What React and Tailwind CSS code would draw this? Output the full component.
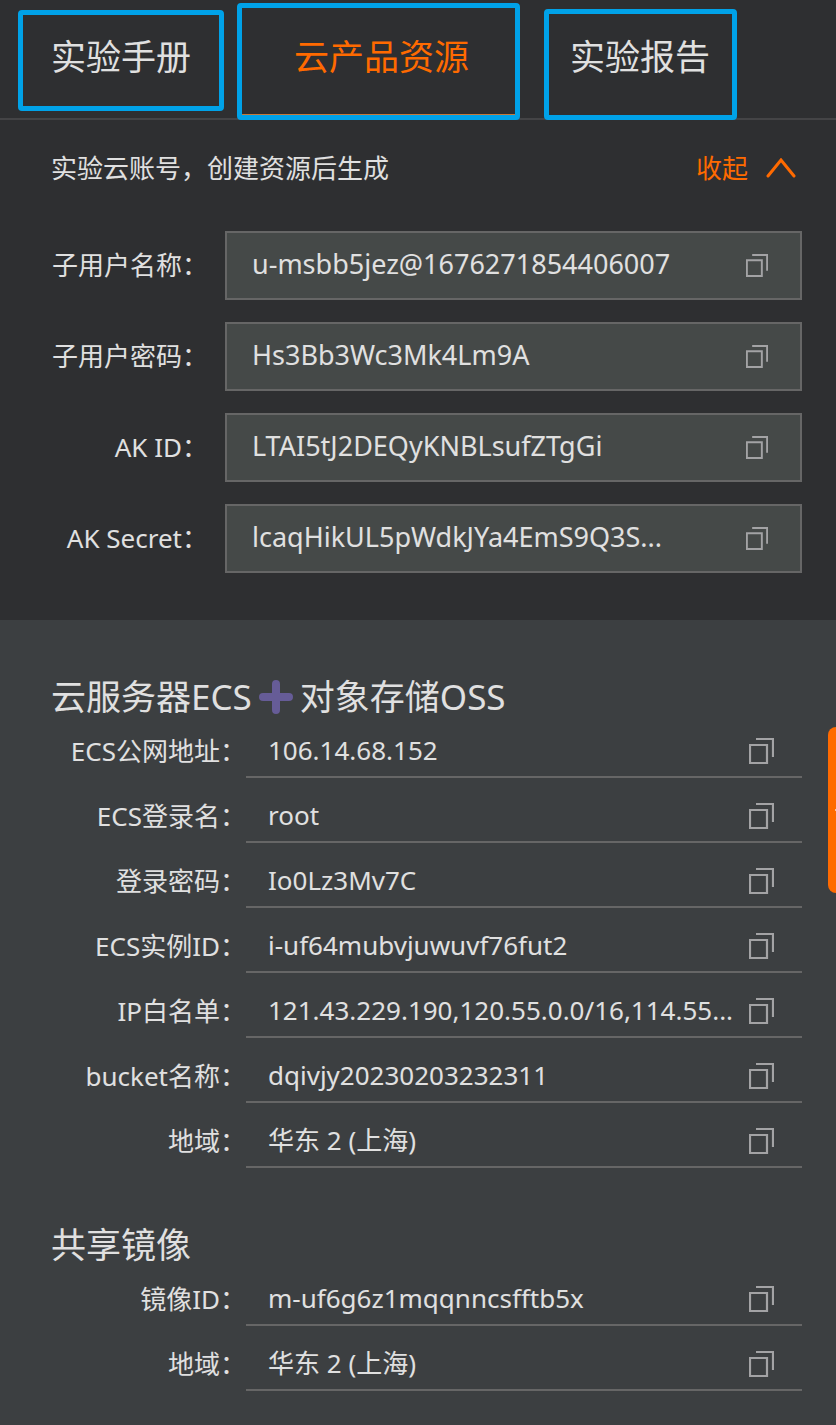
import { useState } from 'react'

const accounts = [
  { id: 'user-name', label: '子用户名称', value: 'u-msbb5jez@1676271854406007' },
  { id: 'user-password', label: '子用户密码', value: 'Hs3Bb3Wc3Mk4Lm9A' },
  { id: 'ak-id', label: 'AK ID', value: 'LTAI5tJ2DEQyKNBLsufZTgGi' },
  { id: 'ak-secret', label: 'AK Secret', value: 'lcaqHikUL5pWdkJYa4EmS9Q3S...' }
]

const resources = [
  { label: 'ECS公网地址', value: '106.14.68.152' },
  { label: 'ECS登录名', value: 'root' },
  { label: '登录密码', value: 'Io0Lz3Mv7C' },
  { label: 'ECS实例ID', value: 'i-uf64mubvjuwuvf76fut2' },
  { label: 'IP白名单', value: '121.43.229.190,120.55.0.0/16,114.55...' },
  { label: 'bucket名称', value: 'dqivjy20230203232311' },
  { label: '地域', value: '华东 2 (上海)' }
]

const images = [
  { label: '镜像ID', value: 'm-uf6g6z1mqqnncsfftb5x' },
  { label: '地域', value: '华东 2 (上海)' }
]

const CopyButton = ({ value, className }) => (
  <button
    type="button"
    aria-label="复制"
    className="block shrink-0 cursor-pointer text-[#a3a3a5]"
    onClick={() => navigator.clipboard?.writeText(value)}
  >
    <svg viewBox="0 0 25 26" className={className} fill="none" stroke="currentColor" strokeWidth="2.2">
      <path d="M1 7h17v18H1z" />
      <path d="M7 1h17v18" />
    </svg>
  </button>
)

const ResourceList = ({ items }) => (
  <dl>
    {items.map((item) => (
      <div key={item.label} className="flex h-[65px]">
        <dt className="w-[195px] shrink-0 pt-[18px] text-right">{item.label}：</dt>
        <dd className="flex min-w-0 flex-1 items-start justify-between border-b-2 border-[#666666] pt-[17px] pl-[22px] pr-7">
          <span className="min-w-0 truncate">{item.value}</span>
          <span className="pt-2">
            <CopyButton value={item.value} className="h-[26px] w-[25px]" />
          </span>
        </dd>
      </div>
    ))}
  </dl>
)

const App = () => {
  const [open, setOpen] = useState(true)

  return (
    <div
      lang="zh-CN"
      className="relative min-h-screen bg-[#3c3f41] font-['Noto_Sans','Noto_Sans_CJK_SC',sans-serif] text-[26px] leading-[40px] text-[#e0e0e0]"
    >
      <div className="bg-[#2e2f31] pb-[47px]">
        {/* Tabs */}
        <nav className="flex h-[120px] items-start border-b-2 border-[#444446] pl-[18px] text-[35px] leading-[52px]">
          <button type="button" className="mt-[10px] h-[101px] shrink-0 rounded-sm border-5 border-[#00a2e8] pb-2 pl-7 pr-7 whitespace-nowrap">
            实验手册
          </button>
          <button type="button" className="mt-[3px] ml-[13px] h-[117px] shrink-0 rounded-sm border-5 border-[#00a2e8] pb-[9px] pl-[52px] pr-[46px] whitespace-nowrap text-[#ff6a00] shadow-[inset_0_-1px_0_#c47a3a]">
            云产品资源
          </button>
          <button type="button" className="mt-[9px] ml-6 h-[111px] shrink-0 rounded-sm border-5 border-[#00a2e8] pb-[15px] pl-[21px] pr-[22px] whitespace-nowrap">
            实验报告
          </button>
        </nav>

        {/* Account */}
        <div className="flex items-center justify-between pt-7 pl-[51px] pr-10">
          <p>实验云账号，创建资源后生成</p>
          <button
            type="button"
            className="flex cursor-pointer items-center gap-[18px] text-[#ff6a00]"
            onClick={() => setOpen(!open)}
          >
            收起
            <svg viewBox="0 0 30 20" className="h-5 w-[30px]" fill="none" stroke="currentColor" strokeWidth="3" strokeLinecap="round">
              <path d="M2 18 15 2l13 16" />
            </svg>
          </button>
        </div>

        {open && (
          <div className="flex flex-col gap-[22px] pt-[43px] pl-[51px] pr-[34px]">
            {accounts.map((item) => (
              <div key={item.id} className="flex items-center">
                <label htmlFor={item.id} className="mr-[17px] w-[157px] shrink-0 pb-0.5 text-right whitespace-nowrap">
                  {item.label}：
                </label>
                <div className="flex h-[69px] min-w-0 flex-1 items-center border-2 border-[#666666] bg-[#454948] pl-[25px] pr-8">
                  <input id={item.id} readOnly value={item.value} className="min-w-0 flex-1 bg-transparent pb-[3px] text-[27px] outline-none" />
                  <CopyButton value={item.value} className="h-[23px] w-[22px]" />
                </div>
              </div>
            ))}
          </div>
        )}
      </div>

      <main className="pt-[60px] pb-[34px] pl-[51px] pr-[34px]">
        <section>
          <h2 className="flex h-[33px] items-center text-[35px] leading-[52px] whitespace-nowrap">
            云服务器ECS
            <svg viewBox="0 0 34 34" className="mx-[7px] h-[34px] w-[34px]" fill="none" stroke="#665c97" strokeWidth="8" strokeLinecap="round">
              <path d="M17 4v26M4 17h26" />
            </svg>
            对象存储OSS
          </h2>
          <ResourceList items={resources} />
        </section>

        <section className="pt-[60px]">
          <h2 className="flex h-[33px] items-center text-[35px] leading-[52px] whitespace-nowrap">共享镜像</h2>
          <ResourceList items={images} />
        </section>
      </main>

      {/* Drawer handle on the right edge */}
      <button type="button" aria-label="展开" className="absolute top-[727px] right-0 flex h-[166px] w-2 items-center justify-end rounded-l-[10px] bg-[#ff6a00]">
        <span className="h-0.5 w-px bg-[#ffc299]" />
      </button>
    </div>
  )
}

export default App
